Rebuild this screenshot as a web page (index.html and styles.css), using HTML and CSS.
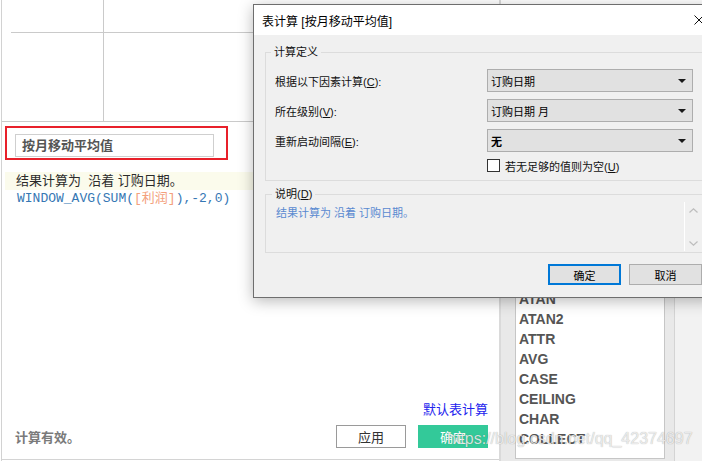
FILE: index.html
```html
<!DOCTYPE html>
<html lang="zh-CN">
<head>
    <meta charset="UTF-8">
    <meta name="viewport" content="width=device-width, initial-scale=1.0">
    <title>表计算</title>
    <link rel="stylesheet" href="styles.css">
</head>
<body>
    <div class="screen">
        <div class="workspace">
            <div class="sheet">
                <div class="sheet_row sheet_head">
                    <div class="sheet_cell"></div>
                </div>
                <div class="sheet_row sheet_body">
                    <div class="sheet_cell"></div>
                </div>
            </div>

            <div class="editor">
                <div class="name_box">
                    <div class="name_input">按月移动平均值</div>
                </div>
                <div class="calc_note">结果计算为&nbsp;&nbsp;沿着 订购日期。</div>
                <div class="formula">WINDOW_AVG(SUM(<span class="formula_field">[利润]</span>),-2,0)</div>
                <div class="editor_space"></div>
                <div class="editor_foot">
                    <div class="link_row">
                        <a class="default_link" href="#">默认表计算</a>
                    </div>
                    <div class="foot_row">
                        <span class="status">计算有效。</span>
                        <div class="foot_buttons">
                            <button type="button" class="apply_button">应用</button>
                            <button type="button" class="ok_button">确定</button>
                        </div>
                    </div>
                </div>
            </div>
        </div>

        <div class="side">
            <div class="side_top"></div>
            <div class="side_main">
                <div class="fn_pane">
                    <div class="fn_list">
                        <div class="fn_item">ABS</div>
                        <div class="fn_item">ACOS</div>
                        <div class="fn_item">ASCII</div>
                        <div class="fn_item">ASIN</div>
                        <div class="fn_item">ATAN</div>
                        <div class="fn_item">ATAN2</div>
                        <div class="fn_item">ATTR</div>
                        <div class="fn_item">AVG</div>
                        <div class="fn_item">CASE</div>
                        <div class="fn_item">CEILING</div>
                        <div class="fn_item">CHAR</div>
                        <div class="fn_item">COLLECT</div>
                    </div>
                </div>
                <div class="side_rest"></div>
            </div>
        </div>
    </div>

    <div class="dialog">
        <div class="dialog_title">
            <span>表计算 [按月移动平均值]</span>
            <svg class="close_icon" width="10" height="10" viewBox="0 0 10 10">
                <path d="M0.5 0.5 L9.5 9.5 M9.5 0.5 L0.5 9.5" stroke="#111" stroke-width="1" fill="none"/>
            </svg>
        </div>
        <div class="dialog_body">
            <fieldset class="group">
                <legend>计算定义</legend>
                <div class="calc_row">
                    <span class="row_label">根据以下因素计算(<u>C</u>):</span>
                    <div class="select_box">
                        <span>订购日期</span>
                        <svg width="8" height="4" viewBox="0 0 8 4"><polygon points="0,0 8,0 4,4" fill="#1a1a1a"/></svg>
                    </div>
                </div>
                <div class="calc_row">
                    <span class="row_label">所在级别(<u>V</u>):</span>
                    <div class="select_box">
                        <span>订购日期 月</span>
                        <svg width="8" height="4" viewBox="0 0 8 4"><polygon points="0,0 8,0 4,4" fill="#1a1a1a"/></svg>
                    </div>
                </div>
                <div class="calc_row">
                    <span class="row_label">重新启动间隔(<u>E</u>):</span>
                    <div class="select_box">
                        <span class="select_strong">无</span>
                        <svg width="8" height="4" viewBox="0 0 8 4"><polygon points="0,0 8,0 4,4" fill="#1a1a1a"/></svg>
                    </div>
                </div>
                <div class="check_row">
                    <span class="check_box"></span>
                    <span>若无足够的值则为空(<u>U</u>)</span>
                </div>
            </fieldset>

            <fieldset class="group desc_group">
                <legend>说明(<u>D</u>)</legend>
                <div class="desc">
                    <div class="desc_text">结果计算为 沿着 订购日期。</div>
                    <div class="desc_scroll">
                        <svg width="9" height="5" viewBox="0 0 9 5"><polyline points="0.5,4.5 4.5,0.8 8.5,4.5" stroke="#bdbdbd" stroke-width="1.2" fill="none"/></svg>
                        <svg width="9" height="5" viewBox="0 0 9 5"><polyline points="0.5,0.5 4.5,4.2 8.5,0.5" stroke="#bdbdbd" stroke-width="1.2" fill="none"/></svg>
                    </div>
                </div>
            </fieldset>

            <div class="dialog_buttons">
                <button type="button" class="win_button win_default">确定</button>
                <button type="button" class="win_button">取消</button>
            </div>
        </div>
    </div>

    <div class="watermark">https://blog.csdn.net/qq_42374697</div>
</body>
</html>
```

FILE: styles.css
```css
/* General */
*{
    box-sizing: border-box;
}
html, body{
    margin: 0px;
    padding: 0px;
}
body{
    width: 702px;
    height: 461px;
    overflow: hidden;
    position: relative;
    background-color: white;
    font-family: "Liberation Sans", "Noto Sans CJK SC", sans-serif;
}
button{
    font-family: "Liberation Sans", "Noto Sans CJK SC", sans-serif;
    cursor: pointer;
}
.screen{
    display: flex;
    height: 461px;
}

/* Workspace */
.workspace{
    width: 500px;
    margin-left: 1px;
    border-left: 1px solid #d2d2d2;
    border-right: 2px solid #dadada;
    display: flex;
    flex-direction: column;
}
.sheet{
    height: 122px;
    border-bottom: 1px solid #cacaca;
}
.sheet_row{
    display: flex;
    margin-left: 9px;
}
.sheet_head{
    height: 33px;
    border-bottom: 1px solid #cacaca;
}
.sheet_body{
    height: 88px;
}
.sheet_cell{
    width: 93px;
    border-right: 1px solid #cacaca;
}

/* Editor */
.editor{
    flex: 1;
    display: flex;
    flex-direction: column;
    padding-top: 4px;
    margin-bottom: 1px;
    border-bottom: 1px solid #d4d4d4;
}
.name_box{
    margin-left: 3px;
    width: 223px;
    height: 34px;
    border: 2px solid #e8202a;
    padding: 6px 0px 0px 8px;
}
.name_input{
    width: 199px;
    height: 23px;
    border: 1px solid #cfcfcf;
    padding-left: 6px;
    line-height: 21px;
    font-size: 13px;
    font-weight: bold;
    color: #555555;
}
.calc_note{
    margin: 12px 0px 0px 3px;
    height: 18px;
    line-height: 18px;
    padding-left: 11px;
    background-color: #fbfbec;
    font-size: 13px;
    color: #2b2b2b;
}
.formula{
    margin-left: 3px;
    padding-left: 12px;
    height: 18px;
    line-height: 18px;
    font-family: "Liberation Mono", "Noto Sans CJK SC", monospace;
    font-size: 13px;
    color: #3677b4;
}
.formula_field{
    color: #f3a07c;
}
.editor_space{
    flex: 1;
}
.editor_foot{
    padding: 0px 11px 11px 13px;
}
.link_row{
    display: flex;
    justify-content: flex-end;
    height: 18px;
    line-height: 18px;
}
.default_link{
    font-size: 13px;
    color: #2323ee;
    text-decoration: none;
}
.foot_row{
    margin-top: 6px;
    display: flex;
    justify-content: space-between;
    align-items: center;
}
.status{
    font-size: 13px;
    font-weight: bold;
    color: #7a7a7a;
}
.foot_buttons{
    display: flex;
    gap: 12px;
}
.apply_button{
    width: 70px;
    height: 23px;
    border: 1px solid #9a9a9a;
    background-color: white;
    font-size: 13px;
    color: #333333;
    padding: 0px;
}
.ok_button{
    width: 70px;
    height: 23px;
    border: none;
    background-color: #33c999;
    font-size: 13px;
    color: white;
    padding: 0px;
}

/* Function list */
.side{
    flex: 1;
    display: flex;
    flex-direction: column;
}
.side_top{
    height: 20px;
    background-color: white;
}
.side_main{
    flex: 1;
    display: flex;
}
.fn_pane{
    width: 174px;
    padding: 20px 9px 2px 14px;
    background-color: #e9e9e9;
    border-right: 1px solid #d4d4d4;
    display: flex;
}
.fn_list{
    flex: 1;
    border: 1px solid #c6c6c6;
    background-color: white;
    overflow: hidden;
    display: flex;
    flex-direction: column;
    justify-content: flex-end;
    padding: 0px 0px 9px 3px;
}
.fn_item{
    line-height: 20px;
    font-size: 14px;
    font-weight: bold;
    color: #555555;
}
.side_rest{
    flex: 1;
    background-color: #f2f2f2;
}

/* Dialog */
.dialog{
    position: absolute;
    left: 253px;
    top: 4px;
    width: 462px;
    border: 1px solid #6e6e6e;
    background-color: #f0f0f0;
    box-shadow: 0px 3px 14px rgba(0, 0, 0, 0.28);
    font-size: 11px;
    color: #111111;
}
.dialog_title{
    height: 30px;
    background-color: white;
    display: flex;
    justify-content: space-between;
    align-items: center;
    padding: 0px 10px 0px 8px;
    font-size: 12px;
    color: #000000;
}
.dialog_body{
    padding: 10px 11px 12px 11px;
}
.group{
    margin: 0px;
    padding: 10px 0px 8px 9px;
    border: 1px solid #dcdcdc;
    min-width: 0px;
}
.group legend{
    margin-left: -4px;
    padding: 0px 3px;
    line-height: 14px;
    font-size: 11px;
}
.calc_row{
    display: flex;
    align-items: center;
    height: 23px;
    margin-bottom: 7px;
}
.row_label{
    width: 212px;
}
.select_box{
    width: 206px;
    height: 23px;
    border: 1px solid #adadad;
    background-color: #e1e1e1;
    display: flex;
    justify-content: space-between;
    align-items: center;
    padding: 0px 6px 0px 3px;
    color: #000000;
}
.select_strong{
    font-weight: bold;
}
.check_row{
    display: flex;
    align-items: center;
    gap: 5px;
    height: 13px;
    margin: 4px 0px 0px 212px;
}
.check_box{
    width: 13px;
    height: 13px;
    border: 1px solid #333333;
    background-color: white;
}
.desc_group{
    margin-top: 6px;
    padding: 1px 0px 1px 10px;
}
.desc{
    display: flex;
    height: 49px;
}
.desc_text{
    flex: 1;
    padding-top: 3px;
    line-height: 16px;
    color: #5a8ad0;
}
.desc_scroll{
    width: 18px;
    border-left: 1px solid white;
    display: flex;
    flex-direction: column;
    justify-content: space-between;
    align-items: center;
    padding: 6px 0px 5px 0px;
}
.dialog_buttons{
    margin: 11px 1px 0px 0px;
    display: flex;
    justify-content: flex-end;
    gap: 8px;
}
.win_button{
    width: 73px;
    height: 21px;
    border: 1px solid #adadad;
    background-color: #e1e1e1;
    font-size: 11px;
    color: #000000;
    padding: 0px;
}
.win_default{
    border: 2px solid #0078d7;
}

/* Watermark */
.watermark{
    position: absolute;
    left: 447px;
    top: 430px;
    font-size: 16px;
    line-height: 18px;
    color: rgba(245, 245, 245, 0.85);
    text-shadow: 0px 0px 1px rgba(0, 0, 0, 0.35);
    white-space: nowrap;
}
```
